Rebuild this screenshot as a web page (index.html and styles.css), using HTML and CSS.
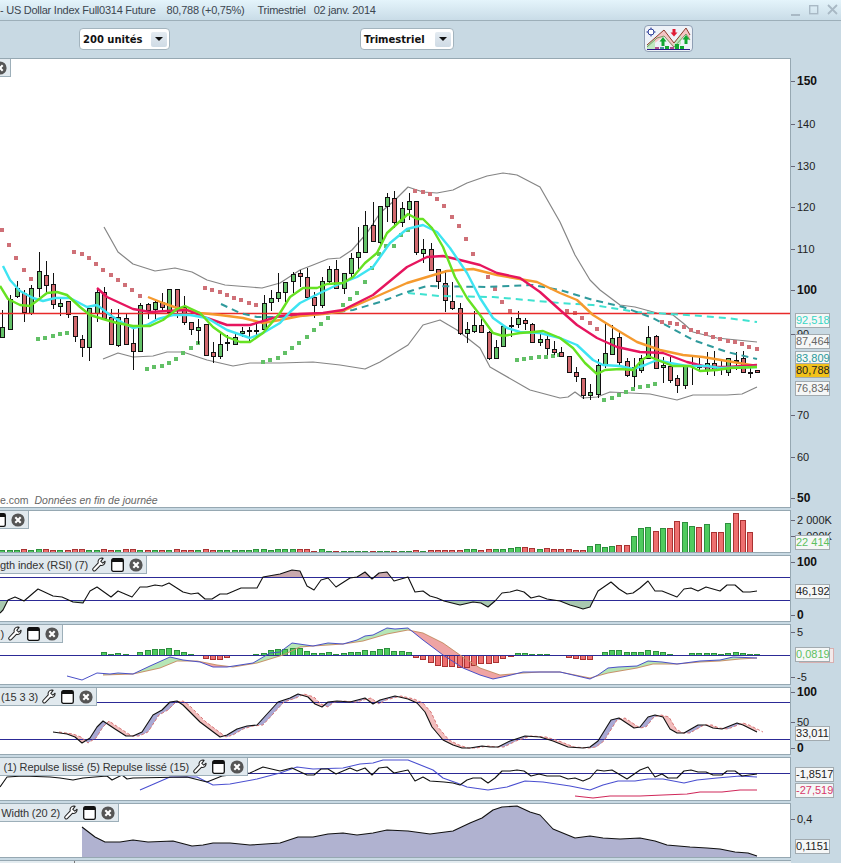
FILE: index.html
```html
<!DOCTYPE html>
<html lang="fr">
<head>
<meta charset="UTF-8">
<title>US Dollar Index Full0314 Future</title>
<link rel="stylesheet" href="styles.css">
</head>
<body>

<svg class="defs" width="0" height="0">
  <symbol id="wrench" viewBox="0 0 15 16">
    <path d="M10.6 1 a4 4 0 0 0 -3.9 5.2 L1.3 12 a1.7 1.7 0 0 0 2.5 2.4 L9 8.9 a4 4 0 0 0 5 -4.4 L11.6 6.6 9.4 4.6 11.9 1.4 z" fill="#fff" stroke="#222" stroke-width="1.1" stroke-linejoin="round"/>
  </symbol>
  <symbol id="window" viewBox="0 0 13 14">
    <rect x="0.7" y="0.7" width="11.6" height="12.6" rx="1.6" fill="#fff" stroke="#111" stroke-width="1.3"/>
    <rect x="1" y="1" width="11" height="3" fill="#111"/>
  </symbol>
  <symbol id="close" viewBox="0 0 14 14">
    <circle cx="7" cy="7" r="6.6" fill="#555"/>
    <path d="M4.3 4.3 L9.7 9.7 M9.7 4.3 L4.3 9.7" stroke="#fff" stroke-width="2.1"/>
  </symbol>
</svg>

<div class="titlebar">
  <span class="title-name">- US Dollar Index Full0314 Future</span>
  <span class="title-price">80,788 (+0,75%)</span>
  <span class="title-period">Trimestriel</span>
  <span class="title-date">02 janv. 2014</span>
  <div class="window-btns">
    <svg width="10" height="14" viewBox="0 0 10 14"><rect x="0" y="11" width="9" height="2" fill="#a9b9c5"/></svg>
    <svg width="10" height="14" viewBox="0 0 10 14"><rect x="0.7" y="2.7" width="8" height="8" fill="none" stroke="#a9b9c5" stroke-width="1.4"/></svg>
    <svg width="11" height="14" viewBox="0 0 11 14"><path d="M1 2 L10 11 M10 2 L1 11" stroke="#a9b9c5" stroke-width="1.8"/></svg>
  </div>
</div>

<div class="toolbar">
  <div class="select select-units">
    <span class="select-text">200 unités</span>
    <span class="select-arrow"></span>
  </div>
  <div class="select select-period">
    <span class="select-text">Trimestriel</span>
    <span class="select-arrow"></span>
  </div>
  <div class="strategy-btn">
    <svg width="47" height="25" viewBox="0 0 47 25">
      <path d="M2 19 L19 4 L29 17 L41 2 L45 9 L45 15 L41 8 L29 23 L19 10 L2 23 z" fill="#f5c4c4"/>
      <path d="M2 19 L10 12 L10 23 L2 23 z M29 17 L36 8 L36 18 L29 23 z" fill="#bfe8c0"/>
      <path d="M2 19 L19 4 L29 17 L41 2 L45 9" fill="none" stroke="#8c3a2a" stroke-width="1"/>
      <path d="M2 21 L12 12 L19 10 L29 21 L41 8 L45 14" fill="none" stroke="#5c8c4a" stroke-width="0.8"/>
      <circle cx="6" cy="6" r="3" fill="#fff" stroke="#2c3f9a" stroke-width="1"/>
      <path d="M6 1.5 V3.5 M6 8.5 V10.5 M1.5 6 H3.5 M8.5 6 H10.5" stroke="#2c3f9a" stroke-width="1"/>
      <path d="M27.5 3 H30.5 V6.5 H32.5 L29 10.5 L25.5 6.5 H27.5 z" fill="#e01c34"/>
      <path d="M16.5 20 V15.5 H14.5 L18 11 L21.5 15.5 H19.5 V20 z" fill="#10a830"/>
      <path d="M39.5 18 V13.5 H37.5 L41 9 L44.5 13.5 H42.5 V18 z" fill="#10a830"/>
      <rect x="10" y="21" width="4" height="2" fill="#b0508a"/>
      <rect x="15" y="21" width="4" height="2" fill="#4a9a9a"/>
      <rect x="20" y="20" width="4" height="3" fill="#10a830"/>
      <rect x="25" y="21" width="4" height="2" fill="#b0508a"/>
      <rect x="30" y="18" width="4" height="5" fill="#10a830"/>
      <rect x="35" y="20" width="4" height="3" fill="#10a830"/>
      <rect x="2" y="23" width="43" height="1" fill="#2a1a8a"/>
    </svg>
  </div>
</div>

<div class="panels">

  <section class="panel panel-main">
    <div class="chart">
      <svg id="price-chart" width="790" height="448" viewBox="0 59 790 448"></svg>
      <div class="tab tab-main"><svg class="ico"><use href="#close"/></svg></div>
      <p class="source">e.com <em>Données en fin de journée</em></p>
    </div>
    <div class="axis">
      <span class="tick bold" style="top:16px">150</span>
      <span class="tick" style="top:59px">140</span>
      <span class="tick" style="top:101px">130</span>
      <span class="tick" style="top:142px">120</span>
      <span class="tick" style="top:184px">110</span>
      <span class="tick bold" style="top:225px">100</span>
      <span class="tick" style="top:269px">90</span>
      <span class="tick" style="top:350px">70</span>
      <span class="tick" style="top:392px">60</span>
      <span class="tick bold" style="top:433px">50</span>
      <span class="tag tag-cyan" style="top:255px">92,518</span>
      <span class="tag tag-grey" style="top:276px">87,464</span>
      <span class="tag tag-teal" style="top:293px">83,809</span>
      <span class="tag tag-price" style="top:305px">80,788</span>
      <span class="tag tag-grey" style="top:323px">76,834</span>
    </div>
  </section>

  <section class="panel panel-volume">
    <div class="chart">
      <svg id="volume-chart" width="790" height="41" viewBox="0 511 790 41"></svg>
      <div class="tab tab-volume">
        <svg class="ico ico-win"><use href="#window"/></svg>
        <svg class="ico"><use href="#close"/></svg>
      </div>
    </div>
    <div class="axis">
      <span class="tick" style="top:3px">2 000K</span>
      <span class="tick" style="top:19px">1 000K</span>
      <span class="tag tag-green" style="top:25px">22 414</span>
    </div>
  </section>

  <section class="panel panel-rsi">
    <div class="chart">
      <svg id="rsi-chart" width="790" height="65" viewBox="0 556 790 65"></svg>
      <div class="tab tab-rsi">
        <span class="tab-label">gth index (RSI) (7)</span>
        <svg class="ico ico-wrench"><use href="#wrench"/></svg>
        <svg class="ico ico-win"><use href="#window"/></svg>
        <svg class="ico"><use href="#close"/></svg>
      </div>
    </div>
    <div class="axis">
      <span class="tick bold" style="top:0px">100</span>
      <span class="tag tag-black" style="top:29px">46,192</span>
      <span class="tick bold" style="top:53px">0</span>
    </div>
  </section>

  <section class="panel panel-macd">
    <div class="chart">
      <svg id="macd-chart" width="790" height="59" viewBox="0 625 790 59"></svg>
      <div class="tab tab-macd">
        <span class="tab-label">)</span>
        <svg class="ico ico-wrench"><use href="#wrench"/></svg>
        <svg class="ico ico-win"><use href="#window"/></svg>
        <svg class="ico"><use href="#close"/></svg>
      </div>
    </div>
    <div class="axis">
      <span class="tick" style="top:1px">5</span>
      <span class="tag tag-behind" style="top:24px"></span>
      <span class="tag tag-green" style="top:23px">0,0819</span>
      <span class="tick" style="top:46px">-5</span>
    </div>
  </section>

  <section class="panel panel-stoch">
    <div class="chart">
      <svg id="stoch-chart" width="790" height="66" viewBox="0 688 790 66"></svg>
      <div class="tab tab-stoch">
        <span class="tab-label">(15 3 3)</span>
        <svg class="ico ico-wrench"><use href="#wrench"/></svg>
        <svg class="ico ico-win"><use href="#window"/></svg>
        <svg class="ico"><use href="#close"/></svg>
      </div>
    </div>
    <div class="axis">
      <span class="tick bold" style="top:-2px">100</span>
      <span class="tick" style="top:28px">50</span>
      <span class="tag tag-black" style="top:39px">33,011</span>
      <span class="tick bold" style="top:54px">0</span>
    </div>
  </section>

  <section class="panel panel-repulse">
    <div class="chart">
      <svg id="repulse-chart" width="790" height="42" viewBox="0 758 790 42"></svg>
      <div class="tab tab-repulse">
        <span class="tab-label">(1) Repulse lissé (5) Repulse lissé (15)</span>
        <svg class="ico ico-wrench"><use href="#wrench"/></svg>
        <svg class="ico ico-win"><use href="#window"/></svg>
        <svg class="ico"><use href="#close"/></svg>
      </div>
    </div>
    <div class="axis">
      <span class="tag tag-black tag-wide" style="top:10px">-1,8517</span>
      <span class="tag tag-crimson tag-wide" style="top:26px">-27,519</span>
    </div>
  </section>

  <section class="panel panel-bbw">
    <div class="chart">
      <svg id="bbw-chart" width="790" height="53" viewBox="0 804 790 53"></svg>
      <div class="tab tab-bbw">
        <span class="tab-label">Width (20 2)</span>
        <svg class="ico ico-wrench"><use href="#wrench"/></svg>
        <svg class="ico ico-win"><use href="#window"/></svg>
        <svg class="ico"><use href="#close"/></svg>
      </div>
    </div>
    <div class="axis">
      <span class="tick" style="top:9px">0,4</span>
      <span class="tag tag-black" style="top:36px">0,1151</span>
    </div>
  </section>

  <div class="date-strip"><span class="date-mark"></span></div>
</div>

<script src="script.js"></script>
</body>
</html>
```

FILE: styles.css
```css
body {
  margin: 0;
  width: 841px;
  height: 863px;
  overflow: hidden;
  background-color: #c8d9e3;
  font-family: "Liberation Sans", Arial, sans-serif;
  color: #333;
}
.defs {
  position: absolute;
}

/* Title bar */
.titlebar {
  display: flex;
  align-items: center;
  height: 20px;
  background: linear-gradient(#e4f4fb, #c9dce7);
  border-bottom: 1px solid #9dafb9;
  font-size: 11px;
  letter-spacing: -0.25px;
  color: #3c4650;
  white-space: nowrap;
}
.title-price {
  margin-left: 11px;
}
.title-period {
  margin-left: 13px;
}
.title-date {
  margin-left: 8px;
}
.window-btns {
  display: flex;
  align-items: center;
  gap: 8px;
  margin-left: auto;
  margin-right: 3px;
}

/* Toolbar */
.toolbar {
  display: flex;
  align-items: flex-start;
  height: 37px;
  box-sizing: border-box;
  padding-left: 79px;
  padding-top: 7px;
}
.select {
  display: flex;
  align-items: center;
  justify-content: space-between;
  box-sizing: border-box;
  height: 22px;
  padding: 0 2px 0 3px;
  background-color: #fff;
  border: 1px solid #a3b4be;
  border-radius: 4px;
}
.select-units {
  width: 91px;
}
.select-period {
  width: 94px;
  margin-left: 190px;
}
.select-text {
  font-family: "DejaVu Sans", sans-serif;
  font-size: 10px;
  font-weight: bold;
  color: #111;
}
.select-arrow {
  display: flex;
  align-items: center;
  justify-content: center;
  width: 16px;
  height: 15px;
  background: linear-gradient(#e4ebf1, #cfdbe5);
  border-radius: 2px;
}
.select-arrow::after {
  content: "";
  border-left: 4px solid transparent;
  border-right: 4px solid transparent;
  border-top: 4px solid #111;
}
.strategy-btn {
  display: flex;
  box-sizing: border-box;
  width: 49px;
  height: 27px;
  margin-left: 190px;
  margin-top: -3px;
  background-color: #eef2f8;
  border: 1px solid #8f9fb4;
  border-radius: 4px;
}

/* Chart panels */
.panels {
  display: flex;
  flex-direction: column;
  gap: 2px;
}
.panel {
  display: flex;
}
.panel-main {
  height: 450px;
}
.panel-volume {
  height: 43px;
}
.panel-rsi {
  height: 67px;
}
.panel-macd {
  height: 61px;
}
.panel-stoch {
  height: 68px;
}
.panel-repulse {
  height: 44px;
}
.panel-bbw {
  height: 55px;
}
.chart {
  position: relative;
  box-sizing: border-box;
  width: 791px;
  height: 100%;
  overflow: hidden;
  background-color: #fff;
  border-top: 1px solid #96a8b2;
  border-bottom: 1px solid #96a8b2;
  border-right: 1px solid #96a8b2;
}
.chart > svg:first-child {
  display: block;
}
.source {
  position: absolute;
  left: 0;
  bottom: 0;
  margin: 0;
  font-size: 10.5px;
  line-height: 14px;
  color: #666;
  white-space: pre;
}
.source em {
  margin-left: 3px;
}

/* Indicator tabs */
.tab {
  position: absolute;
  left: 0;
  top: 0;
  display: flex;
  align-items: center;
  justify-content: flex-end;
  box-sizing: border-box;
  height: 18px;
  padding-right: 3px;
  background-color: #e1e9ee;
  border-right: 1px solid #9dafb9;
  border-bottom: 1px solid #9dafb9;
}
.tab-main {
  width: 11px;
  overflow: hidden;
}
.tab-volume {
  width: 29px;
}
.tab-rsi {
  width: 147px;
}
.tab-macd {
  width: 63px;
}
.tab-stoch {
  width: 97px;
}
.tab-repulse {
  width: 248px;
}
.tab-bbw {
  width: 119px;
}
.tab-label {
  margin-right: 4px;
  font-size: 11px;
  letter-spacing: -0.1px;
  color: #333;
  white-space: nowrap;
}
.ico {
  flex: none;
  width: 14px;
  height: 14px;
}
.ico-wrench {
  width: 14px;
  height: 15px;
}
.ico-win {
  width: 13px;
  height: 14px;
  margin: 0 5px;
}

/* Price axis */
.axis {
  position: relative;
  flex: 1;
}
.tick {
  position: absolute;
  left: 6px;
  font-size: 11px;
  line-height: 14px;
  color: #222;
  white-space: nowrap;
}
.tick::before {
  content: "";
  position: absolute;
  left: -6px;
  top: 7px;
  width: 4px;
  height: 1px;
  background-color: #667;
}
.bold {
  font-size: 12px;
  font-weight: bold;
  color: #111;
}
.tag {
  position: absolute;
  left: 4px;
  box-sizing: border-box;
  width: 35px;
  height: 15px;
  background-color: #f5f7f7;
  border: 1px solid #a2abb0;
  font-size: 11px;
  line-height: 13px;
  text-align: center;
  color: #333;
  white-space: nowrap;
}
.tag-wide {
  width: 39px;
}
.tag-cyan {
  color: #35d6c4;
}
.tag-grey {
  color: #666;
}
.tag-teal {
  color: #2a9a9a;
}
.tag-price {
  background-color: #f1c21c;
  color: #222;
}
.tag-green {
  color: #5cc060;
}
.tag-black {
  color: #222;
}
.tag-crimson {
  color: #d8386a;
}
.tag-behind {
  left: 8px;
  border-color: #d8b0b0;
  background-color: #f4eaea;
}

.date-strip {
  position: relative;
  width: 791px;
  height: 3px;
  background-color: #e4ecf0;
  border-top: 1px solid #96a8b2;
}
.date-mark {
  position: absolute;
  left: 74px;
  top: 0;
  width: 1px;
  height: 3px;
  background-color: #777;
}

/* Chart marks */
.candle-g {
  fill: #64c268;
  stroke: #111;
}
.candle-r {
  fill: #d2686e;
  stroke: #111;
}
.wick {
  stroke: #111;
}
.vol-g {
  fill: #4fcb5e;
  stroke: #2d8f3e;
}
.vol-r {
  fill: #ee6f6f;
  stroke: #a93232;
}
.line {
  fill: none;
  stroke-linejoin: round;
}
.band {
  stroke: #858585;
  stroke-width: 1.2;
}
.ma-lime {
  stroke: #66e222;
  stroke-width: 2.4;
}
.ma-cyan {
  stroke: #3ee4f2;
  stroke-width: 2.4;
}
.ma-pink {
  stroke: #e6155e;
  stroke-width: 2.4;
}
.ma-orange {
  stroke: #f59a2e;
  stroke-width: 2.4;
}
.dash-teal {
  stroke: #2f9a9c;
  stroke-width: 2;
  stroke-dasharray: 7 5;
}
.dash-cyan {
  stroke: #3fe2d0;
  stroke-width: 2;
  stroke-dasharray: 7 5;
}
.level-red {
  stroke: #e82a2a;
  stroke-width: 1.3;
}
.level {
  stroke: #2c2a96;
  stroke-width: 1;
}
.black {
  stroke: #111;
  stroke-width: 1.1;
}
.macd-line {
  stroke: #4a50c8;
  stroke-width: 1;
}
.macd-signal {
  stroke: #c8926a;
  stroke-width: 1;
}
.stoch-signal {
  stroke: #d87878;
  stroke-width: 1;
  stroke-dasharray: 3 2;
}
.rep-blue {
  stroke: #4a4fd0;
  stroke-width: 1.1;
}
.rep-crimson {
  stroke: #d0285a;
  stroke-width: 1.1;
}
.sar-r {
  fill: #cf7077;
}
.sar-g {
  fill: #62c066;
}
```

FILE: script.js
```js
var NS = 'http://www.w3.org/2000/svg';

// [high, body top, body bottom, low, colour], in page pixels
var candles = [
  [310,327,337,338,'g'],[295,299,329,329,'g'],[281,288,296,298,'g'],[290,293,312,322,'r'],[285,288,313,315,'g'],
  [252,271,288,297,'g'],[261,275,285,294,'r'],[273,284,304,309,'r'],[297,303,306,316,'g'],[301,301,314,318,'r'],
  [316,316,336,342,'r'],[335,339,347,357,'r'],[308,308,347,361,'g'],[288,292,313,322,'g'],[287,292,318,318,'r'],
  [309,317,344,345,'r'],[309,317,345,347,'g'],[314,318,344,345,'r'],[329,343,351,370,'r'],[303,305,351,352,'g'],
  [303,304,310,319,'r'],[300,302,309,319,'g'],[293,302,307,310,'r'],[289,289,312,312,'g'],[289,289,308,318,'r'],
  [296,307,322,325,'r'],[322,322,329,335,'r'],[319,327,330,344,'g'],[324,324,355,356,'r'],[342,352,356,363,'r'],
  [332,344,356,359,'g'],[335,342,343,351,'g'],[332,337,344,345,'g'],[327,331,333,337,'g'],[327,330,331,341,'g'],
  [324,330,331,337,'g'],[295,303,329,329,'g'],[290,298,302,311,'g'],[273,292,298,302,'g'],[282,282,292,302,'g'],
  [272,274,281,293,'g'],[270,273,276,287,'r'],[268,277,297,300,'r'],[292,297,305,318,'r'],[277,281,305,308,'g'],
  [266,269,281,283,'g'],[260,269,288,288,'r'],[273,273,288,294,'g'],[253,258,273,280,'g'],[227,252,257,269,'g'],
  [211,225,252,252,'g'],[202,225,241,242,'r'],[206,206,242,245,'g'],[193,197,206,222,'g'],[191,198,222,228,'r'],
  [202,208,222,227,'g'],[193,201,209,220,'g'],[201,201,252,255,'r'],[239,249,253,263,'g'],[243,249,270,271,'r'],
  [269,269,281,289,'r'],[270,283,300,312,'r'],[282,301,308,310,'r'],[303,308,333,335,'r'],[322,329,333,343,'g'],
  [311,325,331,333,'g'],[319,325,332,332,'r'],[331,332,358,360,'r'],[340,347,358,359,'g'],[325,326,346,347,'g'],
  [317,325,326,337,'g'],[311,318,324,328,'g'],[318,320,323,330,'r'],[323,324,342,343,'r'],[333,339,342,346,'g'],
  [333,339,348,355,'r'],[341,349,352,355,'r'],[347,352,356,357,'r'],[356,356,372,372,'r'],[367,372,376,382,'r'],
  [378,378,395,399,'r'],[384,392,395,400,'g'],[359,365,394,398,'g'],[324,353,365,368,'g'],[325,338,354,354,'g'],
  [332,337,362,367,'r'],[358,361,375,377,'r'],[358,367,376,387,'g'],[355,358,370,373,'g'],[326,337,358,358,'g'],
  [335,336,368,368,'r'],[357,365,367,383,'g'],[357,366,380,383,'r'],[375,378,385,393,'r'],[365,365,385,389,'g'],
  [357,365,366,385,'g'],[358,365,367,372,'r'],[352,363,370,375,'g'],[351,363,370,376,'r'],[360,367,368,375,'r'],
  [358,358,372,376,'g'],[352,360,361,370,'r'],[351,358,372,372,'r'],[368,372,373,378,'r'],[370,370,372,372,'r']
];

var upperBand = '104,227 118,252 133,264 155,271 175,268 192,272 207,280 225,285 262,288 280,283 300,270 313,265 328,259 340,258 352,250 367,233 380,213 395,200 408,187 423,192 437,193 453,190 467,183 487,176 503,173 517,175 540,187 560,222 575,255 590,280 600,290 620,305 635,307 657,313 673,315 683,323 693,332 717,338 737,340 757,342';
var lowerBand = '103,359 118,353 133,357 153,356 167,352 183,352 207,360 233,366 250,363 280,363 313,362 340,365 365,369 380,362 408,345 423,325 440,320 457,330 480,348 490,367 530,390 560,398 568,397 575,392 583,398 597,397 610,392 630,393 650,394 677,400 693,395 727,395 742,394 757,387';
var lime = '0,286 8,299 20,305 30,306 38,300 47,293 57,292 67,295 80,307 90,315 103,319 117,323 133,326 150,326 163,320 177,309 185,306 200,313 213,327 227,337 240,342 250,342 263,333 280,313 290,297 303,288 317,288 327,284 343,283 353,277 365,263 377,253 387,233 398,223 408,214 417,219 423,219 432,228 443,247 455,277 467,298 480,315 493,333 503,336 520,333 533,332 543,331 560,338 573,348 585,363 597,374 605,370 620,369 633,370 642,360 648,356 660,361 673,366 690,366 700,371 717,370 730,368 757,367';
var cyan = '3,266 10,280 20,291 33,298 43,301 55,298 70,298 87,307 97,305 110,315 123,323 133,328 147,325 158,319 173,315 190,315 207,318 227,330 250,338 263,333 280,323 290,312 300,303 320,293 337,285 357,277 373,267 390,243 407,229 423,225 437,232 450,248 467,273 480,298 493,318 507,328 520,332 540,333 560,338 577,345 593,360 603,365 620,366 633,369 645,365 657,360 670,363 687,366 707,366 720,368 757,367';
var pink = '97,288 107,297 120,303 133,309 150,312 167,311 187,310 207,318 227,325 250,325 280,316 300,314 323,313 343,310 373,295 407,267 427,257 443,256 460,260 480,265 497,273 520,278 540,292 560,310 577,325 597,338 617,347 640,352 663,353 687,362 707,367 727,367 757,365';
var orange = '148,297 163,303 177,308 200,313 220,315 243,318 263,323 280,320 300,316 323,314 343,311 373,298 407,283 447,271 473,269 497,275 537,282 560,293 577,300 593,315 617,330 637,342 660,350 683,355 703,357 727,361 757,366';
var dashTeal = '221,304 240,313 257,317 280,317 323,314 353,310 380,302 407,292 427,286 487,287 533,285 560,290 593,300 623,307 653,318 693,340 727,352 757,359';
var dashCyan = '408,293 440,296 493,297 560,303 593,305 637,312 687,315 727,318 757,322';

var sarRed = '2,230 9,245 16,258 24,270 31,279 74,252 82,254 89,258 96,264 103,270 111,275 118,280 125,285 132,290 140,296 205,288 212,290 220,292 227,295 234,298 241,300 249,303 256,305 415,191 423,192 430,194 437,199 444,206 452,217 459,226 466,239 473,254 488,277 495,289 502,302 510,311 567,311 575,313 582,318 590,323 597,329 662,322 670,323 677,324 684,327 691,330 698,332 706,334 713,337 720,339 728,341 735,342 742,344 749,347 757,349';
var sarGreen = '38,339 45,338 53,336 60,334 67,333 147,369 154,367 162,366 169,363 176,359 183,353 191,348 198,343 263,362 270,360 278,358 285,353 292,348 299,343 307,337 314,330 321,324 328,318 343,305 350,299 357,293 365,282 372,268 379,254 386,246 394,246 401,235 408,230 517,360 524,359 531,358 539,357 546,357 553,356 559,355 604,400 612,398 619,395 626,392 633,389 640,387 648,386 655,384';

var rsi = '0,613 3,610 8,600 15,597 24,601 38,589 53,596 62,597 73,602 83,603 90,591 97,587 111,597 118,591 132,597 140,587 147,587 155,585 162,586 169,583 183,592 191,594 198,593 205,599 212,599 220,594 227,594 241,588 257,588 263,577 280,574 292,570 300,571 307,586 314,590 321,580 328,578 336,587 350,578 357,577 365,572 372,579 379,573 387,572 394,581 408,577 415,592 423,591 430,596 437,598 444,601 452,603 460,605 473,602 481,603 488,607 495,601 502,593 510,592 517,590 524,592 531,598 539,596 547,599 560,601 570,605 577,607 583,609 590,607 598,591 611,582 619,589 627,594 633,593 640,588 648,581 655,591 662,591 677,597 684,589 691,588 698,591 706,587 720,591 727,585 735,585 743,592 750,592 757,591';

var macd = '67,676 82,680 97,673 110,674 118,673 133,674 150,666 170,657 183,660 200,662 213,667 227,667 253,663 270,653 280,652 292,643 313,646 328,643 343,644 357,640 365,636 373,635 387,628 395,629 408,628 423,640 443,655 463,668 480,675 493,679 507,676 523,672 540,672 560,672 573,675 590,679 598,675 608,668 618,667 637,666 648,661 662,662 677,664 700,661 720,660 733,657 757,658';
var macdSignal = '103,675 133,674 160,668 177,661 197,661 217,665 233,667 257,663 283,655 300,647 313,646 343,644 363,641 387,634 408,630 423,633 443,643 460,655 480,668 500,675 523,673 540,672 560,672 590,678 608,673 637,668 653,664 677,664 700,662 720,661 740,659 757,658';
// histogram heights, one for each candle index from 14 on
var macdBars = [2.7,1,2,1,0,3,5,6,6,7,5,3,1,0,-3,-3.5,-3.5,-1.5,0,0,0.5,1,2,5,6,6,7,7,3.7,2,2,3,1,2,3,3,5,4,6,7,4,4,3,-2.3,-4,-7,-9.7,-11,-11,-12,-12.3,-10,-8,-8,-7,-3,-1,2,2,1,1,1,0.5,0,-2,-3,-4,-3.5,0,3,5,5,3,3,3,5,4,3,1,0,0.5,2,2,2,2,1,2,3,2,1,1];

var stoch = '53,732 67,734 75,737 82,743 90,738 97,727 103,721 115,729 126,736 133,736 142,732 153,715 162,710 170,702 177,701 183,705 200,722 220,737 227,735 237,729 247,726 257,725 278,702 290,698 298,694 308,697 315,704 322,707 328,702 337,701 350,702 365,698 373,704 380,700 395,696 408,699 417,703 425,712 432,727 443,740 453,745 462,748 470,748 482,746 490,747 498,747 510,741 525,736 540,737 553,741 568,747 583,748 590,747 598,741 611,720 619,718 634,728 640,727 648,717 655,715 663,717 670,729 677,733 684,733 698,725 706,725 713,728 722,729 737,723 743,725 757,732';

var repBlack = '0,787 7,777 23,776 50,777 60,778 73,780 83,778 107,776 112,780 122,775 127,779 133,778 187,777 207,782 222,776 250,773 263,767 280,771 292,768 307,775 314,775 321,769 328,769 336,774 350,768 357,771 365,768 372,775 379,768 387,767 394,773 408,770 415,781 423,777 430,781 444,782 453,783 460,785 467,780 473,778 481,778 488,783 495,778 502,771 510,771 517,770 524,771 531,776 539,774 547,776 560,776 568,779 575,778 583,781 590,778 597,770 604,771 612,770 627,779 640,770 648,767 655,777 662,774 668,778 677,778 684,771 691,770 698,772 706,772 713,775 722,775 727,771 735,771 742,776 757,774';
var repBlue = '140,790 170,777 197,777 213,785 230,784 257,779 280,773 297,767 313,769 343,768 360,764 373,763 383,760 408,760 433,770 443,778 457,783 467,787 488,790 507,787 525,781 543,782 570,786 590,790 603,785 618,781 635,781 648,779 663,779 684,783 697,780 717,778 740,776 757,777';
var repCrimson = '575,796 593,798 610,796 640,796 663,795 687,794 700,792 722,792 740,790 757,790';

var bbw = '82,827 95,837 105,842 120,842 133,840 148,842 173,841 192,846 203,845 213,843 230,843 250,845 280,843 298,837 313,837 328,834 343,833 357,835 373,833 387,830 408,831 430,834 453,831 470,823 482,818 493,810 502,807 517,806 530,812 540,815 553,829 575,838 590,836 603,838 620,839 640,838 655,841 667,845 690,847 707,848 720,849 735,852 748,853 757,856';

// Create an svg element with its attributes and add it to the chart
function add(chart, tag, attrs) {
  var el = document.createElementNS(NS, tag);
  for (var key in attrs) {
    el.setAttribute(key, attrs[key]);
  }
  chart.appendChild(el);
  return el;
}

function line(chart, points, cls) {
  add(chart, 'polyline', { points: points, 'class': 'line ' + cls });
}

function level(chart, y, cls) {
  add(chart, 'line', { x1: 0, x2: 790, y1: y, y2: y, 'class': 'line ' + cls, 'shape-rendering': 'crispEdges' });
}

function dots(chart, points, cls) {
  parse(points).forEach(function(p) {
    add(chart, 'rect', { x: p[0] - 2, y: p[1] - 2, width: 4, height: 4, 'class': cls });
  });
}

function parse(points) {
  return points.split(' ').map(function(p) {
    return p.split(',').map(Number);
  });
}

function yAt(pts, x) {
  for (var i = 1; i < pts.length; i++) {
    if (x <= pts[i][0]) {
      var t = (x - pts[i - 1][0]) / (pts[i][0] - pts[i - 1][0]);
      return pts[i - 1][1] + t * (pts[i][1] - pts[i - 1][1]);
    }
  }
  return pts[pts.length - 1][1];
}

// Paint the space between two lines, one colour for each side
function fillBetween(chart, first, second, upColor, downColor) {
  var a = parse(first);
  var b = parse(second);
  var start = Math.ceil(Math.max(a[0][0], b[0][0]));
  var end = Math.floor(Math.min(a[a.length - 1][0], b[b.length - 1][0]));
  var up = '';
  var down = '';
  for (var x = start; x < end; x++) {
    var ya = yAt(a, x + 0.5);
    var yb = yAt(b, x + 0.5);
    var slice = 'M' + x + ' ' + ya + 'H' + (x + 1) + 'V' + yb + 'H' + x + 'Z';
    if (ya < yb) {
      up += slice;
    } else {
      down += slice;
    }
  }
  if (upColor && up) {
    add(chart, 'path', { d: up, fill: upColor, 'shape-rendering': 'crispEdges' });
  }
  if (downColor && down) {
    add(chart, 'path', { d: down, fill: downColor, 'shape-rendering': 'crispEdges' });
  }
}

function candleX(i) {
  return Math.round(2.3 + 7.26 * i);
}

function drawCandles(chart) {
  candles.forEach(function(c, i) {
    var x = candleX(i);
    var g = add(chart, 'g', { 'shape-rendering': 'crispEdges' });
    add(g, 'line', { x1: x + 0.5, x2: x + 0.5, y1: c[0], y2: c[3], 'class': 'wick' });
    add(g, 'rect', { x: x - 1.5, y: c[1] + 0.5, width: 4, height: Math.max(c[2] - c[1], 1), 'class': 'candle-' + c[4] });
  });
}

function drawPrice() {
  var chart = document.getElementById('price-chart');
  line(chart, upperBand, 'band');
  line(chart, lowerBand, 'band');
  dots(chart, sarRed, 'sar-r');
  dots(chart, sarGreen, 'sar-g');
  drawCandles(chart);
  line(chart, '0,313.5 790,313.5', 'level-red');
  line(chart, dashCyan, 'dash-cyan');
  line(chart, dashTeal, 'dash-teal');
  line(chart, orange, 'ma-orange');
  line(chart, pink, 'ma-pink');
  line(chart, cyan, 'ma-cyan');
  line(chart, lime, 'ma-lime');
}

function drawVolume() {
  var chart = document.getElementById('volume-chart');
  // early bars are only a few pixels tall
  var low = [2,2,2,3,2,3,3,2,2,2,3,3,2,2,3,2,2,3,3,2,2,2,2,2,3,2,2,2,3,2,2,2,2,2,2,3,3,2,3,3,3,3,3,1,3,1,1,1,1,1,1,1,1,1,1,1,1,2,1,2,2,2,2,2,3,3,2,3,3,3,4,5,5,4];
  var tops = { 74:549, 75:548, 76:549, 77:549, 78:549, 79:550, 80:550, 81:546, 82:544, 83:547, 84:546, 85:545, 86:545, 87:536, 88:528, 89:527, 90:531, 91:528, 92:528, 93:521, 94:522, 95:526, 96:527, 97:524, 98:532, 99:532, 100:523, 101:513, 102:520, 103:532 };
  for (var i = 0; i < 104; i++) {
    var top = i < 74 ? 552 - low[i] : tops[i];
    add(chart, 'rect', {
      x: candleX(i) - 2.5, y: top + 0.5, width: 5, height: 552 - top,
      'class': 'vol-' + candles[i][4], 'shape-rendering': 'crispEdges'
    });
  }
}

function drawRsi() {
  var chart = document.getElementById('rsi-chart');
  fillBetween(chart, rsi, '0,577.5 790,577.5', '#c9a9ad', null);
  fillBetween(chart, rsi, '0,600.5 790,600.5', null, '#a9c8b0');
  level(chart, 577.5, 'level');
  level(chart, 600.5, 'level');
  line(chart, rsi, 'black');
}

function drawMacd() {
  var chart = document.getElementById('macd-chart');
  fillBetween(chart, macd, macdSignal, '#b6e6b6', '#efa4a4');
  macdBars.forEach(function(h, n) {
    if (h === 0) return;
    var x = candleX(n + 14);
    var y = h > 0 ? 655 - h : 655;
    add(chart, 'rect', {
      x: x - 2.5, y: y + 0.5, width: 5, height: Math.abs(h),
      'class': h > 0 ? 'vol-g' : 'vol-r', 'shape-rendering': 'crispEdges'
    });
  });
  level(chart, 655.5, 'level');
  line(chart, macdSignal, 'macd-signal');
  line(chart, macd, 'macd-line');
}

function drawStoch() {
  var chart = document.getElementById('stoch-chart');
  var signal = parse(stoch).map(function(p) {
    return (p[0] + 6) + ',' + p[1];
  }).join(' ');
  fillBetween(chart, stoch, signal, '#a9a9d4', '#f2bdbd');
  level(chart, 702.5, 'level');
  level(chart, 739.5, 'level');
  line(chart, signal, 'stoch-signal');
  line(chart, stoch, 'black');
}

function drawRepulse() {
  var chart = document.getElementById('repulse-chart');
  level(chart, 773.5, 'level');
  line(chart, repCrimson, 'rep-crimson');
  line(chart, repBlue, 'rep-blue');
  line(chart, repBlack, 'black');
}

function drawBbw() {
  var chart = document.getElementById('bbw-chart');
  fillBetween(chart, bbw, '0,857 790,857', '#b0b2d0', null);
  line(chart, bbw, 'black');
}

drawPrice();
drawVolume();
drawRsi();
drawMacd();
drawStoch();
drawRepulse();
drawBbw();
```
